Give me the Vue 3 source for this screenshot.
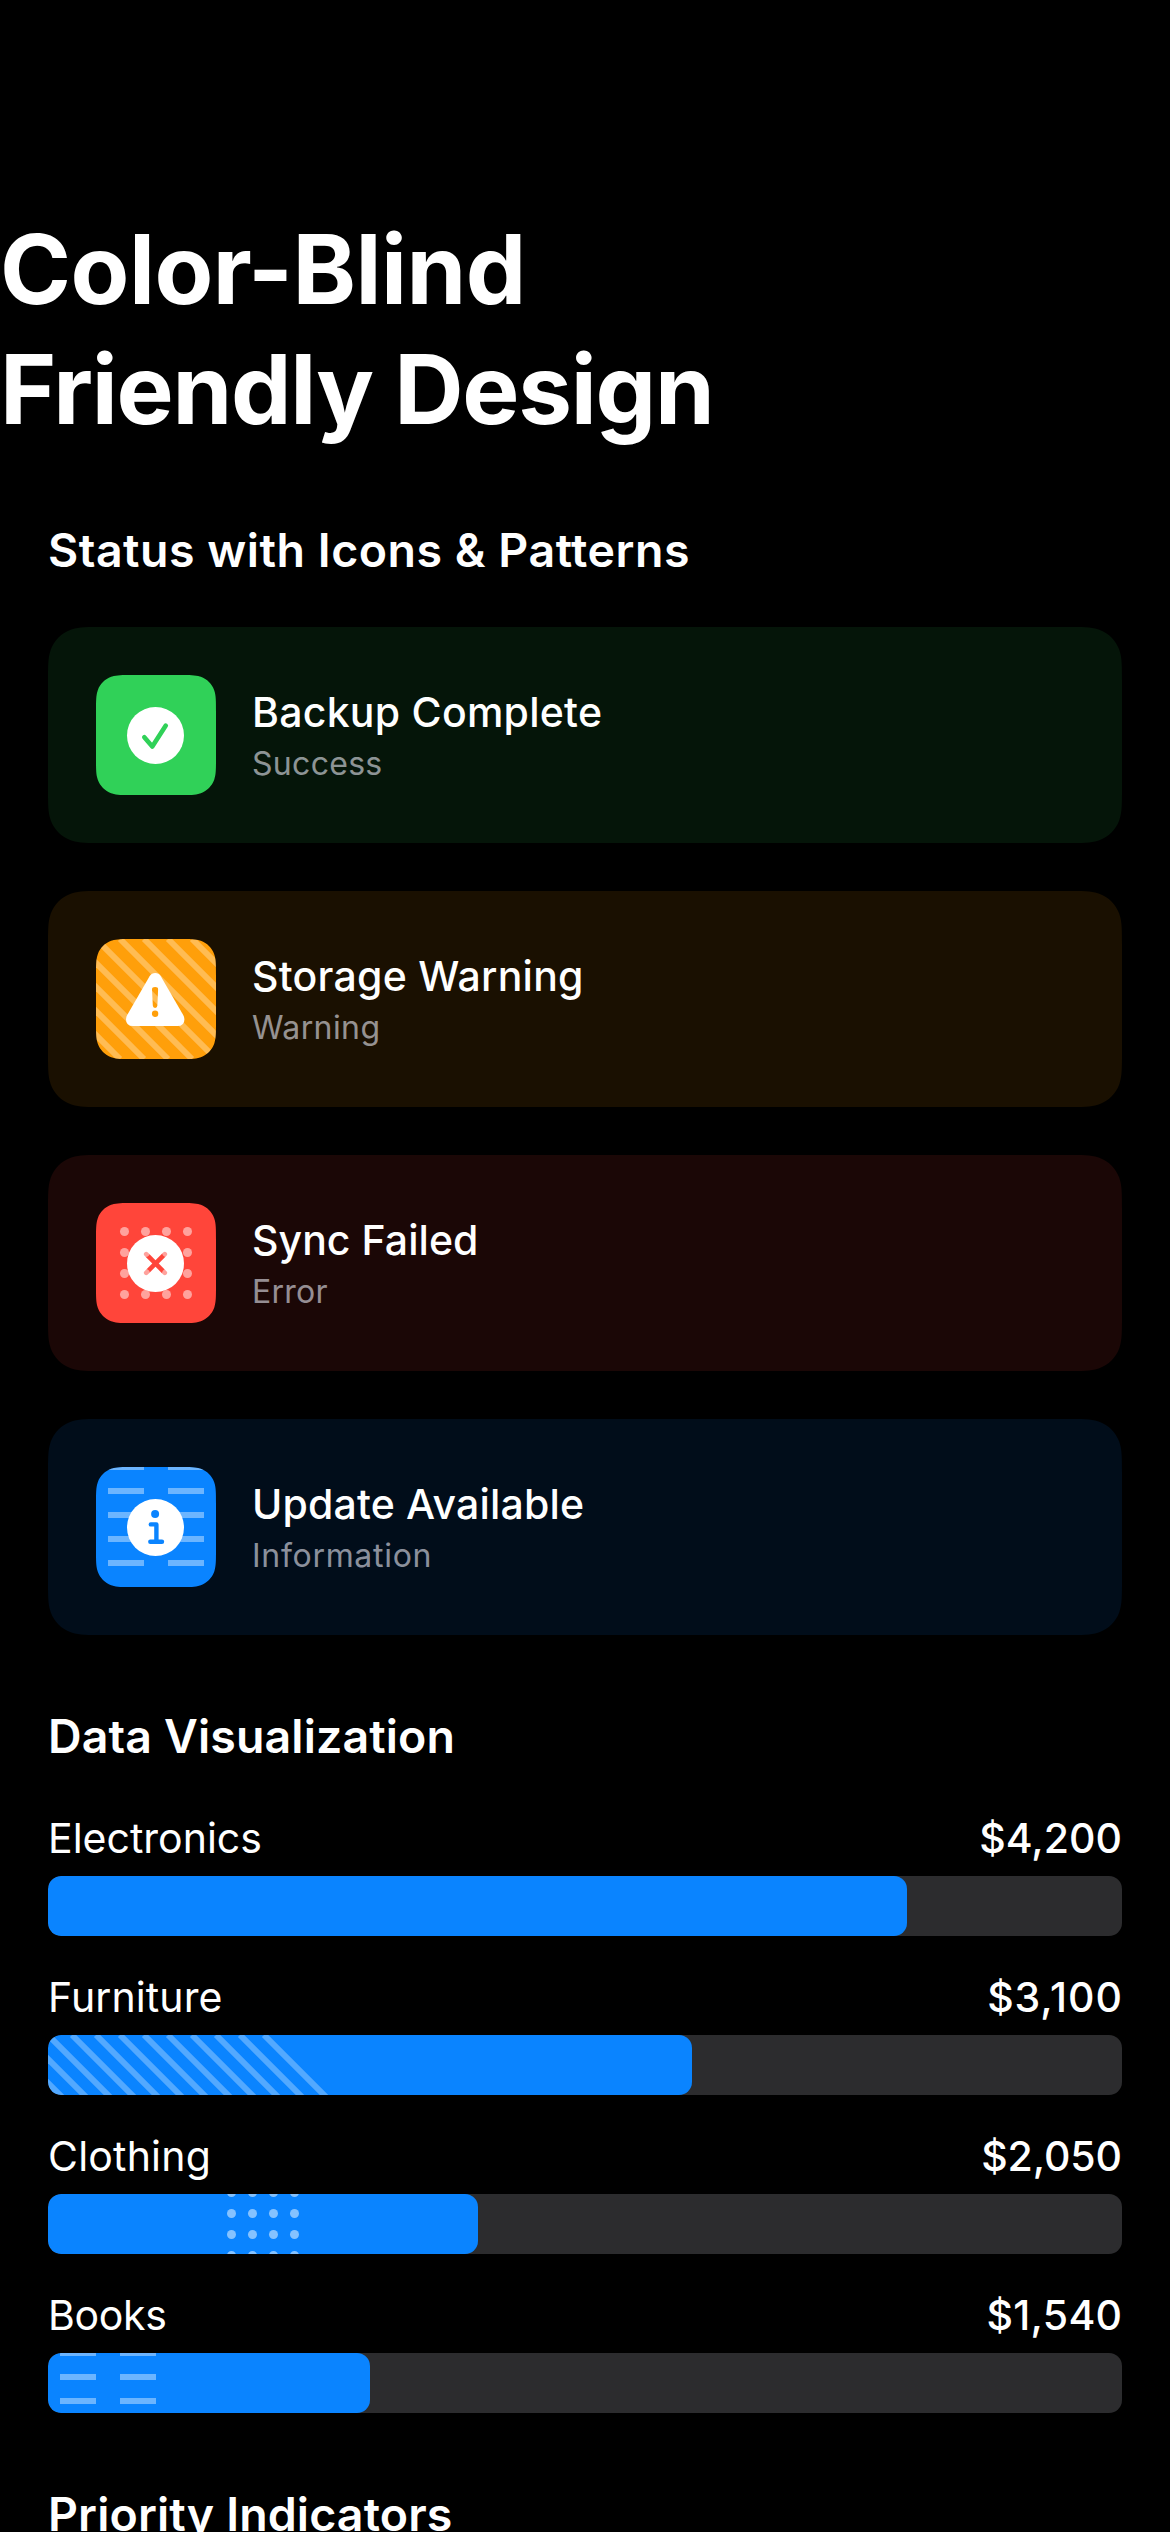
<script setup>
const titleLines = [
  { text: 'Color-Blind', tracking: -0.48 },
  { text: 'Friendly Design', tracking: -1.23 },
]

const statuses = [
  { kind: 'success', title: 'Backup Complete', titleTracking: 0.26, label: 'Success', labelTracking: 0.3 },
  { kind: 'warning', title: 'Storage Warning', titleTracking: 0.26, label: 'Warning', labelTracking: 0.4 },
  { kind: 'error', title: 'Sync Failed', titleTracking: 0.04, label: 'Error', labelTracking: 0.25 },
  { kind: 'info', title: 'Update Available', titleTracking: 0.17, label: 'Information', labelTracking: 0.7 },
]

const sales = [
  { name: 'Electronics', nameTracking: 0, amount: '$4,200', amountTracking: 0, share: 80, pattern: 'solid' },
  { name: 'Furniture', nameTracking: 0.1, amount: '$3,100', amountTracking: 0.95, share: 60, pattern: 'stripes' },
  { name: 'Clothing', nameTracking: 0.2, amount: '$2,050', amountTracking: -0.1, share: 40, pattern: 'dots' },
  { name: 'Books', nameTracking: -0.3, amount: '$1,540', amountTracking: 0.25, share: 30, pattern: 'dashes' },
]

const tileStripes = Array.from({ length: 10 }, (_, i) => (i - 5) * 24)
const barStripes = Array.from({ length: 12 }, (_, i) => (i - 2) * 24)
const steps = [0, 1, 2, 3]
const rows = [0, 24, 48, 72, 96]

const tracked = (n) => ({ letterSpacing: `${n}px` })
const trackedEnd = (n) => ({ letterSpacing: `${n}px`, marginRight: `${-n}px` })

// Continuous-curvature rounded rectangle.
function squircle(w, h, r) {
  const a = 1.52866483 * r, b = 1.08849323 * r, c = 0.86840689 * r
  const d = 0.66993427 * r, e = 0.065496 * r, f = 0.63149399 * r, g = 0.07491176 * r
  const j = 0.37282392 * r, k = 0.16905899 * r
  return [
    `M${a} 0L${w - a} 0C${w - b} 0 ${w - c} 0 ${w - d} ${e}L${w - f} ${g}`,
    `C${w - j} ${k} ${w - k} ${j} ${w - g} ${f}L${w - e} ${d}C${w} ${c} ${w} ${b} ${w} ${a}`,
    `L${w} ${h - a}C${w} ${h - b} ${w} ${h - c} ${w - e} ${h - d}L${w - g} ${h - f}`,
    `C${w - k} ${h - j} ${w - j} ${h - k} ${w - f} ${h - g}L${w - d} ${h - e}C${w - c} ${h} ${w - b} ${h} ${w - a} ${h}`,
    `L${a} ${h}C${b} ${h} ${c} ${h} ${d} ${h - e}L${f} ${h - g}`,
    `C${j} ${h - k} ${k} ${h - j} ${g} ${h - f}L${e} ${h - d}C0 ${h - c} 0 ${h - b} 0 ${h - a}`,
    `L0 ${a}C0 ${b} 0 ${c} ${e} ${d}L${g} ${f}C${k} ${j} ${j} ${k} ${f} ${g}L${d} ${e}C${c} 0 ${b} 0 ${a} 0Z`,
  ].join('')
}

const cardClip = { clipPath: `path('${squircle(1074, 216, 36)}')` }
const tileClip = { clipPath: `path('${squircle(120, 120, 24)}')` }
</script>

<template>
  <main class="screen">
    <h1 class="title">
      <span v-for="l in titleLines" :key="l.text" class="title-line" :style="tracked(l.tracking)">{{ l.text }}</span>
    </h1>

    <section class="section">
      <h2 class="heading wide">Status with Icons &amp; Patterns</h2>
      <div class="cards">
        <article v-for="s in statuses" :key="s.kind" class="card" :class="s.kind" :style="cardClip">
          <svg class="tile" viewBox="0 0 120 120" :style="tileClip">
            <rect class="tile-bg" width="120" height="120" />
            <template v-if="s.kind === 'success'">
              <circle class="glyph" cx="59.5" cy="60.5" r="28.5" />
              <path class="check" d="M48.3 62.3L56.3 71.6L69.8 50.6" />
            </template>
            <template v-else-if="s.kind === 'warning'">
              <path v-for="x in tileStripes" :key="x" class="stripe" :d="`M${x} 0l120 120`" />
              <mask id="warn-cut" maskUnits="userSpaceOnUse" x="0" y="0" width="120" height="120">
                <rect width="120" height="120" fill="#fff" />
                <path d="M56 50.4Q56 48 59.1 48Q62.2 48 62.1 50.4L61.4 66.6Q61.3 69 59.1 69Q56.9 69 56.8 66.6Z" fill="#000" />
                <circle cx="59.1" cy="74.7" r="3.2" fill="#000" />
              </mask>
              <path class="glyph" mask="url(#warn-cut)" d="M53.6 37.2Q55.6 33.9 59.2 33.9Q62.8 33.9 64.8 37.2L87.2 76.1Q88.4 78.2 88.4 80.4Q88.4 87 81.4 87H37Q30 87 30 80.4Q30 78.2 31.2 76.1Z" />
            </template>
            <template v-else-if="s.kind === 'error'">
              <template v-for="r in steps" :key="r">
                <circle v-for="c in steps" :key="c" class="dot" :cx="28.5 + c * 21" :cy="28.5 + r * 21" r="4.5" />
              </template>
              <mask id="cross-cut" maskUnits="userSpaceOnUse" x="0" y="0" width="120" height="120">
                <rect width="120" height="120" fill="#fff" />
                <path d="M50.2 51.2L68.8 69.8M68.8 51.2L50.2 69.8" stroke="#000" stroke-width="4.6" stroke-linecap="round" />
              </mask>
              <circle class="glyph" mask="url(#cross-cut)" cx="59.5" cy="60.5" r="28.5" />
            </template>
            <template v-else>
              <path v-for="y in rows" :key="y" class="dash" :d="`M12 ${y}h36M72 ${y}h36`" />
              <circle class="glyph" cx="59.5" cy="60.5" r="28.5" />
              <circle class="info-dot" cx="59.1" cy="47" r="4" />
              <path class="info-stem" d="M54.8 57.4H60.4V74.5M54.3 74.7H66" />
            </template>
          </svg>
          <div class="card-text">
            <h3 class="card-title" :style="tracked(s.titleTracking)">{{ s.title }}</h3>
            <p class="card-label" :style="tracked(s.labelTracking)">{{ s.label }}</p>
          </div>
        </article>
      </div>
    </section>

    <section class="section data">
      <h2 class="heading">Data Visualization</h2>
      <div class="bars">
        <div v-for="b in sales" :key="b.name" class="row">
          <div class="row-head">
            <span class="name" :style="tracked(b.nameTracking)">{{ b.name }}</span>
            <span class="amount" :style="trackedEnd(b.amountTracking)">{{ b.amount }}</span>
          </div>
          <div class="track">
            <div class="fill" :class="b.pattern" :style="{ width: b.share + '%' }">
              <svg v-if="b.pattern === 'stripes'" class="pattern" width="300" height="60">
                <path v-for="x in barStripes" :key="x" class="stripe" :d="`M${x} 0l90 90`" />
              </svg>
              <svg v-else-if="b.pattern === 'dots'" class="pattern" width="72" height="60">
                <template v-for="r in steps" :key="r">
                  <circle v-for="c in steps" :key="c" class="dot" :cx="4.5 + c * 21" :cy="-1.5 + r * 21" r="4.5" />
                </template>
              </svg>
              <svg v-else-if="b.pattern === 'dashes'" class="pattern" width="120" height="60">
                <path v-for="y in rows" :key="y" class="dash" :d="`M12 ${y}h36M72 ${y}h36`" />
              </svg>
            </div>
          </div>
        </div>
      </div>
    </section>

    <section class="section priority">
      <h2 class="heading">Priority Indicators</h2>
    </section>
  </main>
</template>

<style>
body {
  background: #000;
}
</style>

<style scoped>
.screen {
  box-sizing: border-box;
  height: 2532px;
  overflow: hidden;
  padding-top: 209px;
  background: #000;
  color: #fff;
  font-family: Inter, "Liberation Sans", sans-serif;
}
h1, h2, h3, p {
  margin: 0;
}
.title {
  font-size: 96px;
  line-height: 120px;
  font-weight: 700;
  white-space: nowrap;
}
.title-line {
  display: block;
}
.section {
  padding: 0 48px;
}
.title + .section {
  margin-top: 72px;
}
.heading {
  font-size: 46.5px;
  line-height: 58px;
  font-weight: 600;
  letter-spacing: 0.13px;
  white-space: nowrap;
}
.heading.wide {
  letter-spacing: 0.51px;
}
.cards {
  display: flex;
  flex-direction: column;
  gap: 48px;
  margin-top: 48px;
}
.card {
  display: flex;
  align-items: center;
  gap: 36px;
  height: 216px;
  box-sizing: border-box;
  padding: 48px;
}
.card.success { background: #051509; }
.card.warning { background: #1a1001; }
.card.error { background: #1b0706; }
.card.info { background: #010d1a; }
.tile {
  display: block;
  flex: none;
  width: 120px;
  height: 120px;
}
.success .tile-bg { fill: #30d158; }
.warning .tile-bg { fill: #ff9f0a; }
.error .tile-bg { fill: #ff453a; }
.info .tile-bg { fill: #0a84ff; }
.glyph { fill: #fff; }
.check {
  fill: none;
  stroke: #30d158;
  stroke-width: 4.6;
  stroke-linecap: round;
  stroke-linejoin: round;
}
.info-dot { fill: #0a84ff; }
.info-stem {
  fill: none;
  stroke: #0a84ff;
  stroke-width: 4.4;
  stroke-linecap: round;
  stroke-linejoin: round;
}
.stripe {
  fill: none;
  stroke: rgba(255, 255, 255, 0.3);
  stroke-width: 6;
}
.dot { fill: rgba(255, 255, 255, 0.5); }
.dash {
  fill: none;
  stroke: rgba(255, 255, 255, 0.4);
  stroke-width: 6;
}
.card-text {
  padding-bottom: 1px;
  white-space: nowrap;
}
.card-title {
  margin-bottom: 4px;
  font-size: 41px;
  line-height: 54px;
  font-weight: 500;
}
.card-label {
  font-size: 32px;
  line-height: 41px;
  color: rgba(235, 235, 245, 0.6);
}
.data {
  margin-top: 72px;
}
.bars {
  display: flex;
  flex-direction: column;
  gap: 36px;
  margin-top: 48px;
}
.row-head {
  display: flex;
  justify-content: space-between;
  font-size: 41px;
  line-height: 50px;
  margin-bottom: 13px;
}
.amount {
  font-weight: 500;
}
.track {
  height: 60px;
  border-radius: 13px;
  background: #2c2c2e;
  overflow: hidden;
}
.fill {
  display: flex;
  height: 60px;
  border-radius: 13px;
  background: #0a84ff;
  overflow: hidden;
}
.fill.dots {
  justify-content: center;
}
.pattern {
  display: block;
  flex: none;
}
.priority {
  margin-top: 72px;
}
</style>
